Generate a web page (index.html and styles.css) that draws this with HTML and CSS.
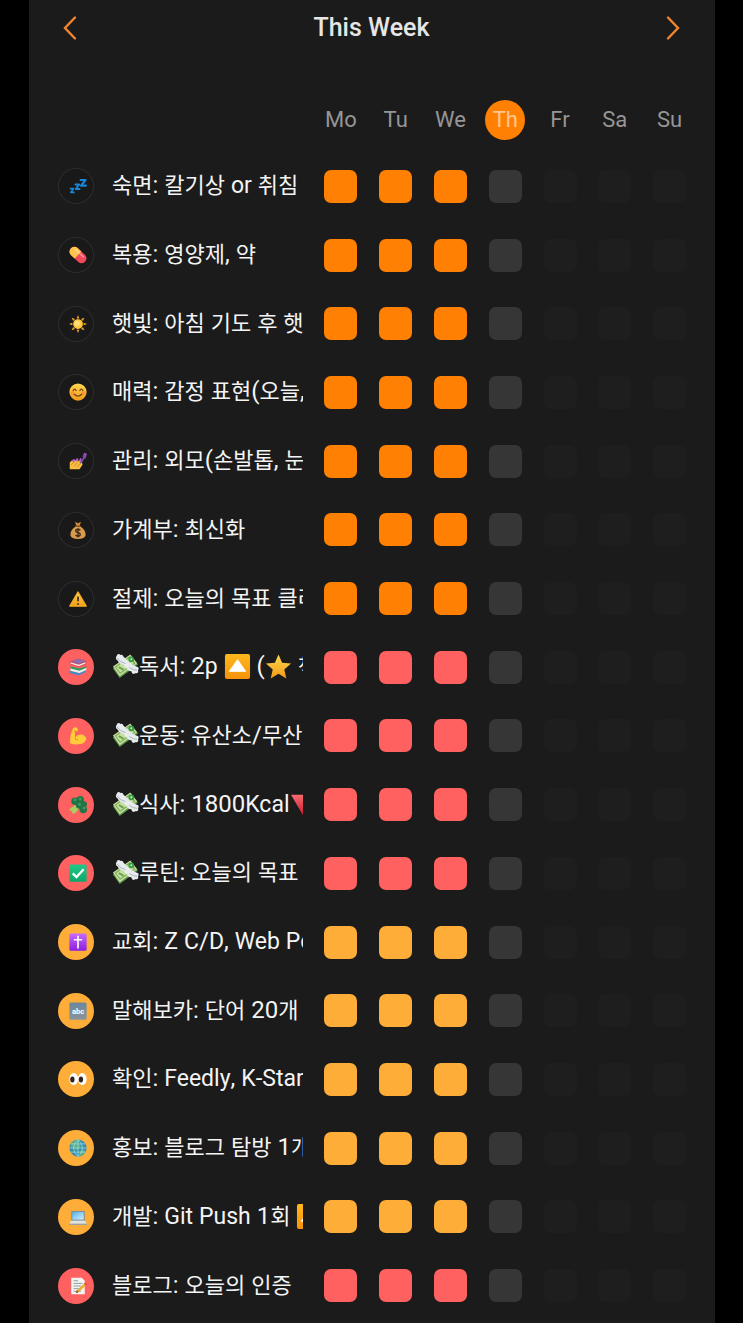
FILE: index.html
```html
<!DOCTYPE html>
<html lang="ko">
<head>
<meta charset="utf-8">
<meta name="viewport" content="width=device-width, initial-scale=1">
<title>This Week</title>
<link rel="stylesheet" href="styles.css">
</head>
<body>
<svg class="sprite" aria-hidden="true">
  <defs>
    <linearGradient id="g-gold" x1="0" y1="0" x2="0" y2="1"><stop offset="0" stop-color="#ffd84e"/><stop offset="1" stop-color="#f39a17"/></linearGradient>
    <linearGradient id="g-button" x1="0" y1="0" x2="0" y2="1"><stop offset="0" stop-color="#ffb91e"/><stop offset="1" stop-color="#f5920a"/></linearGradient>
    <linearGradient id="g-red" x1="0" y1="0" x2="0" y2="1"><stop offset="0" stop-color="#f76a6e"/><stop offset="1" stop-color="#c9182c"/></linearGradient>
    <linearGradient id="g-purple" x1="0" y1="0" x2="0" y2="1"><stop offset="0" stop-color="#c86bff"/><stop offset="1" stop-color="#8a1fe0"/></linearGradient>
    <linearGradient id="g-green" x1="0" y1="0" x2="0" y2="1"><stop offset="0" stop-color="#1fc98b"/><stop offset="1" stop-color="#0ba968"/></linearGradient>
    <linearGradient id="g-slate" x1="0" y1="0" x2="0" y2="1"><stop offset="0" stop-color="#69879f"/><stop offset="1" stop-color="#8b949b"/></linearGradient>
    <linearGradient id="g-screen" x1="0" y1="0" x2="1" y2="1"><stop offset="0" stop-color="#58b4e8"/><stop offset="1" stop-color="#cfeefa"/></linearGradient>
  </defs>
  <symbol id="zzz" viewBox="0 0 24 24"><g fill="none" stroke="#1788d8" stroke-linejoin="round" stroke-linecap="round"><path stroke-width="2.800" d="M15.500 4h6.500l-6 7.500h6.500"/><path stroke-width="2.500" d="M8.500 10h5l-4.500 6h5"/><path stroke-width="2.200" d="M2 15.500h4l-3.500 5h4"/></g></symbol>
  <symbol id="pill" viewBox="0 0 24 24"><g transform="rotate(42 12 12)"><rect x="-1" y="5.500" width="26" height="13" rx="6.500" fill="#f2495a"/><path d="M12 5.500H5.500a6.500 6.500 0 0 0 0 13H12z" fill="#ffc44c"/><path d="M5 9h14" stroke="#fff" stroke-opacity=".4" stroke-width="2" stroke-linecap="round"/></g></symbol>
  <symbol id="sun" viewBox="0 0 24 24"><g fill="#f6a81f"><path id="ray" d="M12 0l1.700 4.500h-3.400z"/><use href="#ray" transform="rotate(45 12 12)"/><use href="#ray" transform="rotate(90 12 12)"/><use href="#ray" transform="rotate(135 12 12)"/><use href="#ray" transform="rotate(180 12 12)"/><use href="#ray" transform="rotate(225 12 12)"/><use href="#ray" transform="rotate(270 12 12)"/><use href="#ray" transform="rotate(315 12 12)"/></g><circle cx="12" cy="12" r="6.500" fill="#ffc93d"/><circle cx="11" cy="11" r="3.500" fill="#ffe07a"/></symbol>
  <symbol id="smile" viewBox="0 0 24 24"><circle cx="12" cy="12" r="11.500" fill="url(#g-gold)"/><circle cx="4.800" cy="13.500" r="2.700" fill="#ff8a3c" opacity=".7"/><circle cx="19.200" cy="13.500" r="2.700" fill="#ff8a3c" opacity=".7"/><path d="M5.500 10q2-3.500 4 0M14.500 10q2-3.500 4 0M7 15q5 5 10 0" fill="none" stroke="#71401c" stroke-width="1.700" stroke-linecap="round"/></symbol>
  <symbol id="nails" viewBox="0 0 24 24"><path d="M1 23V14q3-4 7-3l9 1 1 5-4 6z" fill="#f7bd45"/><path d="M3 17l4-4M7 19l4-5M11 20l4-5" stroke="#d28b1c" stroke-width="1.200"/><path d="M4 12l2-3 2 1-1 4zM8.500 11l2-3 2 1-1 4zM13 12l2-4 2 1-1 5z" fill="#b458cc"/><path d="M20 8l-5 7" stroke="#7d579f" stroke-width="2"/><path d="M20 1l4 1-2 7-4-2z" fill="#8d48b5"/></symbol>
  <symbol id="moneybag" viewBox="0 0 24 24"><path d="M8 1l4 2 4-2-2 6h-4z" fill="#c98a3e"/><path d="M9 7h6q8 6 7 12-1 5-10 5T2 19Q1 13 9 7z" fill="#d99a4b"/><path d="M8.500 7h7" stroke="#8a551e" stroke-width="1.800"/><path d="M15 12.500q-1-1.500-3-1.500-3 0-3 2.200 0 1.800 3 2.300t3 2.500q0 2.200-3 2.200-2.300 0-3.200-1.700M12 9.500v12.500" fill="none" stroke="#3d2a18" stroke-width="1.800"/></symbol>
  <symbol id="warning" viewBox="0 0 24 24"><path d="M12 2.500L23 21.500H1z" fill="url(#g-gold)" stroke="#f5ab25" stroke-width="1.500" stroke-linejoin="round"/><path d="M12 8.500v6.500M12 17.500v2" stroke="#3b3226" stroke-width="2.400"/></symbol>
  <symbol id="books" viewBox="0 0 24 24"><path d="M1 17l12 3 9-4v3l-9 4-12-3z" fill="#3d8cc8"/><path d="M2 13l12 3 9-3v3l-9 4-12-3z" fill="#e9f2ea"/><path d="M2 11l12 3 9-3v2l-9 4-12-3z" fill="#2d9e62"/><path d="M1 5L12 1l11 3v4l-10 4L1 8z" fill="#d63b4c"/><path d="M2 6.500l11 3.500 9-3.500" fill="none" stroke="#f4e9e4" stroke-width="1.800"/><path d="M3 4.500L12 1l11 3-10 4z" fill="#8e6dad"/></symbol>
  <symbol id="muscle" viewBox="0 0 24 24"><path d="M5 2q3-3 6-1l1 4-4 2v7q3-4 7-4 7 0 8 6-1 7-12 7Q4 24 1 21q0-10 4-19z" fill="#ffca3b"/><path d="M8 14q0 4 4 3M12 5L8 7V4" fill="none" stroke="#dc951d" stroke-width="1.300"/></symbol>
  <symbol id="broccoli" viewBox="0 0 24 24"><path d="M10 11L1 17q-1 3 3 3-1 4 4 3l7-8z" fill="#a9cf62"/><g fill="#227447"><circle cx="8" cy="7" r="5"/><circle cx="15" cy="5" r="5"/><circle cx="20" cy="11" r="4"/><circle cx="14" cy="12" r="5"/><circle cx="19" cy="18" r="5"/></g><g fill="#3c9b57"><circle cx="8" cy="5" r="2"/><circle cx="15" cy="4" r="2"/><circle cx="14" cy="11" r="2"/><circle cx="20" cy="16" r="2"/></g></symbol>
  <symbol id="check" viewBox="0 0 24 24"><rect x=".5" y=".5" width="23" height="23" rx="2" fill="url(#g-green)"/><path d="M5 12.500l5 5L19.500 7" fill="none" stroke="#fff" stroke-width="3"/></symbol>
  <symbol id="cross" viewBox="0 0 24 24"><rect x=".5" y=".5" width="23" height="23" rx="2" fill="url(#g-purple)"/><path d="M12 3.500v17M6.500 9h11" stroke="#fff" stroke-width="2.200"/></symbol>
  <symbol id="abc" viewBox="0 0 24 24"><rect x=".5" y=".5" width="23" height="23" rx="2" fill="url(#g-slate)"/><text x="12" y="15.500" class="abc-text">abc</text></symbol>
  <symbol id="eyes" viewBox="0 0 24 24"><ellipse cx="6.300" cy="12" rx="5.800" ry="8" fill="#fff"/><ellipse cx="17.700" cy="12" rx="5.800" ry="8" fill="#fff"/><ellipse cx="4.500" cy="12.500" rx="2.900" ry="4" fill="#30241f"/><ellipse cx="15.900" cy="12.500" rx="2.900" ry="4" fill="#30241f"/></symbol>
  <symbol id="globe" viewBox="0 0 24 24"><circle cx="12" cy="12" r="11.500" fill="#3290ae"/><path d="M4 4q5-4 11-3l-2 5 3 4-5 5-3-2-6-3zM14 17l5-3 3 3q-3 5-7 6z" fill="#58b08b"/><path d="M12 .5v23M.5 12h23M2.500 6.500h19M2.500 17.500h19M12 .5q-12 11.500 0 23M12 .5q12 11.500 0 23" fill="none" stroke="#a4dae2" stroke-width="1"/></symbol>
  <symbol id="laptop" viewBox="0 0 24 24"><rect x="3" y="4" width="18" height="13" rx="1" fill="#7890a5"/><rect x="4.500" y="5.500" width="15" height="10" fill="url(#g-screen)"/><path d="M3 17h18l3 4H0z" fill="#dbe4e9"/><path d="M0 21h24v1.500H0z" fill="#91a0ab"/></symbol>
  <symbol id="memo" viewBox="0 0 24 24"><path d="M3 1h14l4 4v18H3z" fill="#f4f5f2"/><path d="M6 5h6M6 8.500h12M6 12h10M6 15.500h7M6 19h10" stroke="#8f9ba6" stroke-width="1.300"/><path d="M22 7l2.500 2.500L13 20l-4 1.500 1.500-4z" fill="#f3ab2c"/><path d="M22 7l2.500 2.500-2 2L20 9z" fill="#d94f55"/><path d="M9 21.500l1.500-4 2.500 2.500z" fill="#6d4e37"/></symbol>
  <symbol id="cash" viewBox="0 0 28 28"><path d="M1 16L20 3l7 9L8 26z" fill="#5e9a4b"/><path d="M1 14L19 1.500l7 9L8 24z" fill="#c7dfa1"/><path d="M3.500 14.500L18.500 4l5 6.500L8.500 21z" fill="none" stroke="#7cab5c" stroke-width="1.200"/><circle cx="20" cy="6.500" r="3" fill="#369c43"/><circle cx="20" cy="6.500" r="1" fill="#d6edb5"/><path d="M7 14.500l5 3" stroke="#6ba04d" stroke-width="2"/><path d="M9 8l6 8 5-5z" fill="#edf0ec"/><path d="M16 12Q8 13 6 8 3 6 4.500 3.500 6-.5 9 2q2-1 3 2l7 7zM15 13q0 6 5 6 1 4 4 2 4 0 3-3 2-4-2-4l-7-4z" fill="#e7ebee"/><path d="M5 5q4 5 9 6M18 15q4 3 8 3" fill="none" stroke="#a9b3bb" stroke-width="1"/></symbol>
  <symbol id="up" viewBox="0 0 28 28"><rect x="1" y="1" width="26" height="26" rx="2" fill="url(#g-button)"/><path d="M14 7l8.500 12h-17z" fill="#fff" stroke="#fff" stroke-width="1" stroke-linejoin="round"/></symbol>
  <symbol id="star" viewBox="0 0 28 28"><path d="M14 1.500l3.700 8.700 9.300.8-7 6.100 2.100 9.400L14 21.600l-8.100 4.900L8 17.100 1 11l9.300-.8z" fill="url(#g-gold)"/></symbol>
  <symbol id="down" viewBox="0 0 28 28"><path d="M1 4h26L14 26z" fill="url(#g-red)"/></symbol>
</svg>

<main class="panel">
  <header class="bar">
    <button class="nav" type="button" aria-label="Previous week"><svg viewBox="0 0 16 26"><path d="M13 2.500L3 13l10 10.500"/></svg></button>
    <h1 class="title">This Week</h1>
    <button class="nav" type="button" aria-label="Next week"><svg viewBox="0 0 16 26"><path d="M3 2.500L13 13 3 23.500"/></svg></button>
  </header>
  <table class="tracker">
    <colgroup><col class="col-habit"><col span="7"></colgroup>
    <thead>
      <tr>
        <td></td>
        <th scope="col"><span class="day">Mo</span></th>
        <th scope="col"><span class="day">Tu</span></th>
        <th scope="col"><span class="day">We</span></th>
        <th scope="col"><span class="day today">Th</span></th>
        <th scope="col"><span class="day">Fr</span></th>
        <th scope="col"><span class="day">Sa</span></th>
        <th scope="col"><span class="day">Su</span></th>
      </tr>
    </thead>
    <tbody id="habits"></tbody>
  </table>
</main>
<script src="app.js"></script>
</body>
</html>
```
FILE: styles.css
```css
* { box-sizing: border-box; }

body {
  margin: 0;
  padding: 0 28px 0 29px;
  background: #000;
  color: #f4f4f4;
  font-family: Roboto, "Noto Sans CJK KR", sans-serif;
}

.sprite { position: absolute; width: 0; height: 0; }

.abc-text {
  font: 700 10px Roboto, sans-serif;
  fill: #fff;
  text-anchor: middle;
}

.panel {
  min-height: 100vh;
  padding: 0 18px 3px 29px;
  background: #1b1b1b;
}

.bar {
  display: flex;
  align-items: center;
  justify-content: space-between;
  height: 55px;
  margin-bottom: 33px;
  padding-right: 12px;
}

.title {
  margin: 0;
  font-size: 25px;
  font-weight: 500;
  line-height: 32px;
  color: #e6e6e6;
}

.nav {
  display: flex;
  padding: 4px;
  border: 0;
  background: none;
  cursor: pointer;
}

.nav svg {
  width: 16px;
  height: 26px;
  fill: none;
  stroke: #f5842a;
  stroke-width: 2.400;
  stroke-linecap: round;
}

.tracker {
  width: 100%;
  height: calc(100vh - 91px);
  table-layout: fixed;
  border-collapse: collapse;
}

.col-habit { width: 40%; }

.tracker th,
.tracker td {
  padding: 0;
  text-align: center;
  vertical-align: middle;
  font-weight: 400;
}

.tracker thead tr { height: 64px; }
.tracker tbody td { padding: 12px 0; }

.day {
  display: inline-flex;
  align-items: center;
  justify-content: center;
  width: 40px;
  height: 40px;
  border-radius: 50%;
  font-size: 22px;
  line-height: 24px;
  color: #969696;
  vertical-align: middle;
}

.today {
  background: #ff8003;
  color: #ffc68e;
}

.habit {
  display: flex;
  align-items: center;
  gap: 18px;
  padding-right: 11px;
}

.badge {
  display: flex;
  flex: none;
  align-items: center;
  justify-content: center;
  width: 36px;
  height: 36px;
  padding-left: 4px;
  border-radius: 50%;
}

.badge svg { width: 18px; height: 18px; }

.orange { --tone: #ff8003; }
.red { --tone: #ff6060; }
.amber { --tone: #ffad39; }

.red .badge,
.amber .badge { background: var(--tone); }

.orange .badge { background: #191919; box-shadow: inset 0 0 0 1px #2d2d2d; }

.name {
  flex: 1;
  min-width: 0;
  overflow: hidden;
  white-space: nowrap;
  text-align: left;
  font-size: 22px;
  line-height: 32px;
}

.word { font-size: 23px; line-height: 1; }
.sign { font-size: 24px; line-height: 1; }

.emoji {
  width: 27px;
  height: 27px;
  vertical-align: -6px;
}

.box {
  display: block;
  width: 33px;
  height: 33px;
  margin: 0 auto;
  appearance: none;
  border-radius: 7px;
  background: #363636;
}

.box:checked { background: var(--tone); }
.box:disabled { background: #1e1e1e; }
```
FILE: app.js
```js
const DAYS = ["Mo", "Tu", "We", "Th", "Fr", "Sa", "Su"];
const DONE_UNTIL = 3;
const TODAY = 3;

// {name} inserts a small picture.
const HABITS = [
  ["orange", "zzz", "숙면: 칼기상 or 취침"],
  ["orange", "pill", "복용: 영양제, 약"],
  ["orange", "sun", "햇빛: 아침 기도 후 햇빛"],
  ["orange", "smile", "매력: 감정 표현(오늘, 내일)"],
  ["orange", "nails", "관리: 외모(손발톱, 눈썹)"],
  ["orange", "moneybag", "가계부: 최신화"],
  ["orange", "warning", "절제: 오늘의 목표 클리어"],
  ["red", "books", "{cash}독서: 2p {up} ({star} 책"],
  ["red", "muscle", "{cash}운동: 유산소/무산소"],
  ["red", "broccoli", "{cash}식사: 1800Kcal{down}"],
  ["red", "check", "{cash}루틴: 오늘의 목표"],
  ["amber", "cross", "교회: Z C/D, Web Post"],
  ["amber", "abc", "말해보카: 단어 20개"],
  ["amber", "eyes", "확인: Feedly, K-Startup"],
  ["amber", "globe", "홍보: 블로그 탐방 1개"],
  ["amber", "laptop", "개발: Git Push 1회 {up}"],
  ["red", "memo", "블로그: 오늘의 인증"],
];

// Latin letters, digits and signs are set a little larger than Hangul so that all look the same size.
const format = (text) => text.replace(/\{(\w+)\}|[A-Za-z]+|[\x20-\x40]+/g, (run, icon) => {
  if (icon) return `<svg class="emoji" aria-hidden="true"><use href="#${icon}"/></svg>`;
  return `<span class="${/[a-z]/i.test(run) ? "word" : "sign"}">${run}</span>`;
});

const plain = (text) => text.replace(/\{\w+\}/g, "");

const cell = (day, index, name) => {
  const state = index < DONE_UNTIL ? "checked" : index > TODAY ? "disabled" : "";
  return `<td><input class="box" type="checkbox" aria-label="${plain(name)} ${day}" ${state}></td>`;
};

document.getElementById("habits").innerHTML = HABITS.map(([tone, icon, name]) => `
  <tr class="${tone}">
    <th scope="row">
      <div class="habit">
        <span class="badge"><svg aria-hidden="true"><use href="#${icon}"/></svg></span>
        <span class="name">${format(name)}</span>
      </div>
    </th>
    ${DAYS.map((day, index) => cell(day, index, name)).join("")}
  </tr>`).join("");
```
